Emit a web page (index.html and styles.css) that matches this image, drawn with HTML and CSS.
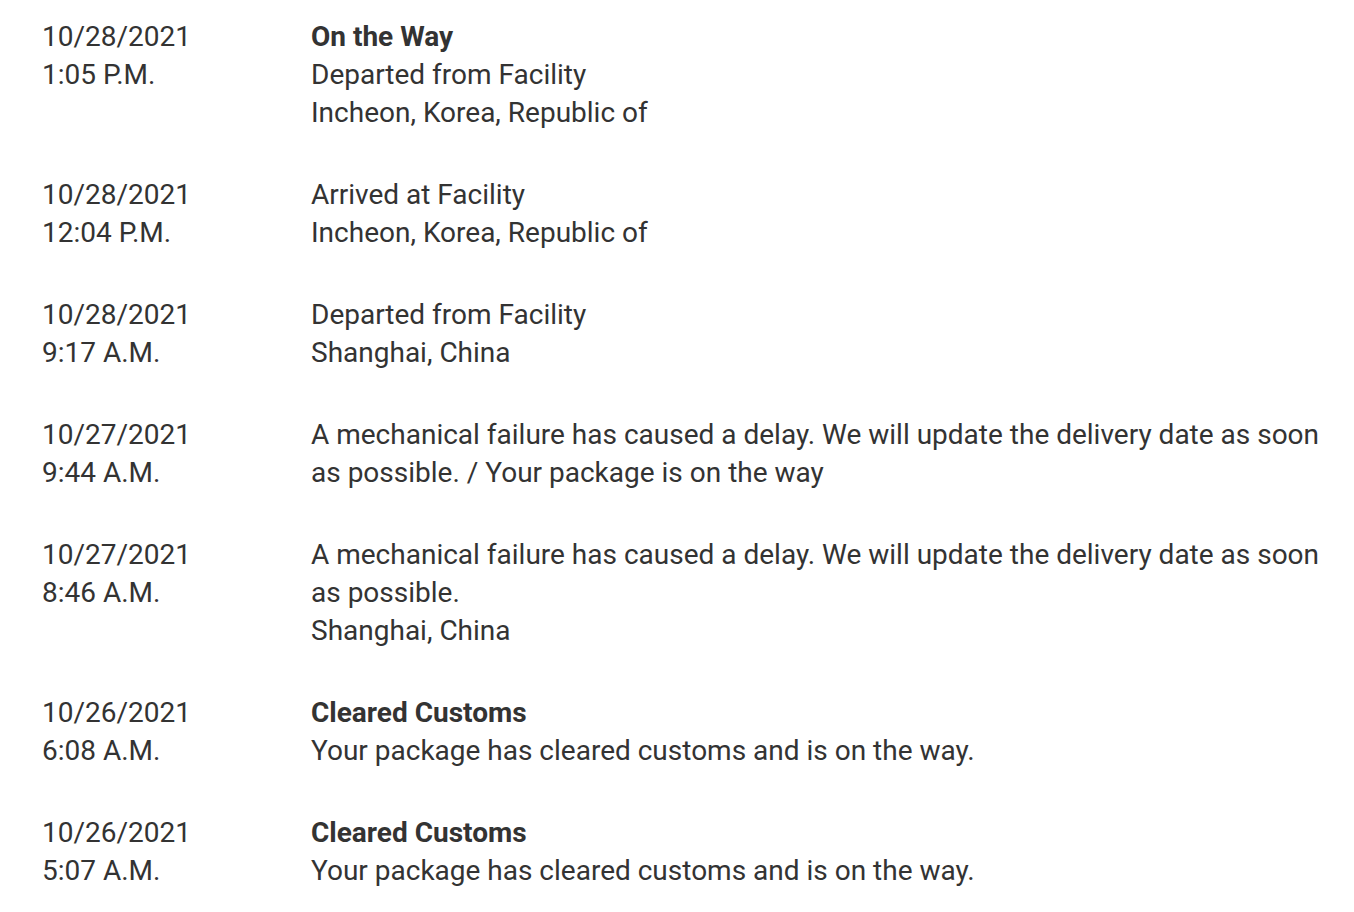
FILE: index.html
```html
<!DOCTYPE html>
<html>
<head>
<meta charset="utf-8">
<link rel="stylesheet" href="styles.css">
</head>
<body>
<ul class="track">
  <li class="event">
    <div class="when">10/28/2021<br>1:05 P.M.</div>
    <div class="what"><strong>On the Way</strong><br>Departed from Facility<br>Incheon, Korea, Republic of</div>
  </li>
  <li class="event">
    <div class="when">10/28/2021<br>12:04 P.M.</div>
    <div class="what">Arrived at Facility<br>Incheon, Korea, Republic of</div>
  </li>
  <li class="event">
    <div class="when">10/28/2021<br>9:17 A.M.</div>
    <div class="what">Departed from Facility<br>Shanghai, China</div>
  </li>
  <li class="event">
    <div class="when">10/27/2021<br>9:44 A.M.</div>
    <div class="what">A mechanical failure has caused a delay. We will update the delivery date as soon as possible. / Your package is on the way</div>
  </li>
  <li class="event">
    <div class="when">10/27/2021<br>8:46 A.M.</div>
    <div class="what">A mechanical failure has caused a delay. We will update the delivery date as soon as possible.<br>Shanghai, China</div>
  </li>
  <li class="event">
    <div class="when">10/26/2021<br>6:08 A.M.</div>
    <div class="what"><strong>Cleared Customs</strong><br>Your package has cleared customs and is on the way.</div>
  </li>
  <li class="event">
    <div class="when">10/26/2021<br>5:07 A.M.</div>
    <div class="what"><strong>Cleared Customs</strong><br>Your package has cleared customs and is on the way.</div>
  </li>
</ul>
</body>
</html>
```
FILE: styles.css
```css
html, body {
  margin: 0;
  padding: 0;
  background: #fff;
}
body {
  font-family: Roboto, "Liberation Sans", sans-serif;
  font-size: 28px;
  line-height: 38px;
  color: #333;
}
.track {
  list-style: none;
  margin: 0;
  padding: 18px 18px 0 42px;
  display: flex;
  flex-direction: column;
  gap: 44px;
}
.event {
  display: grid;
  grid-template-columns: 269px 1fr;
}
.what strong {
  font-weight: 700;
}
```
